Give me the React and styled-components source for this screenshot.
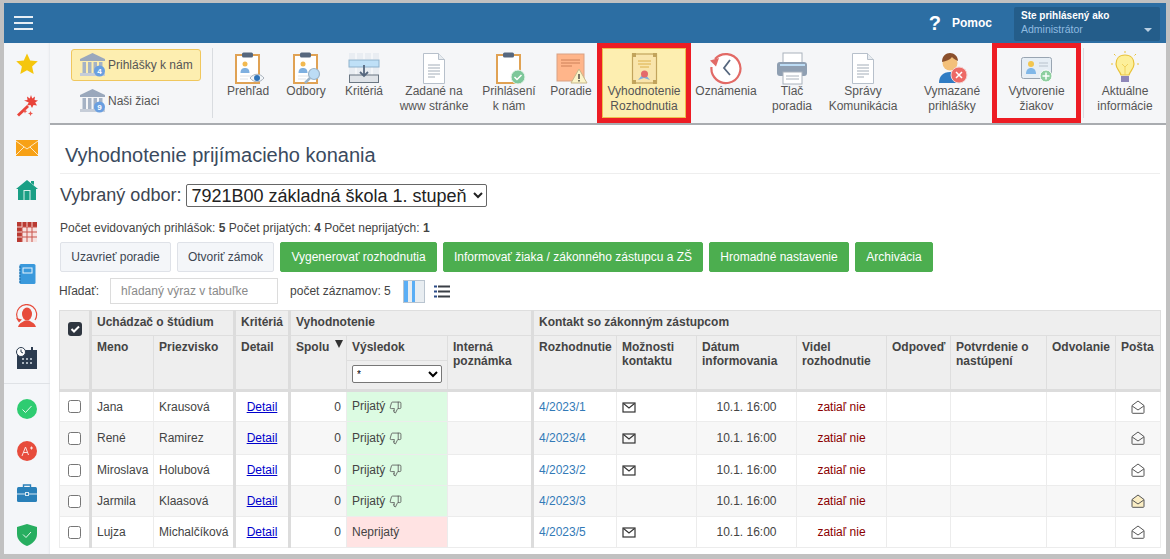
import React from "react";
import styled, { createGlobalStyle } from "styled-components";
import { ThumbsDown } from "lucide-react";

const GlobalStyle = createGlobalStyle`
  html, body {
    margin: 0;
    padding: 0;
    background: #c1c1c1;
    font-family: "Liberation Sans", Arial, sans-serif;
  }
`;

const Page = styled.div`
  box-sizing: border-box;
  width: 1170px;
  height: 559px;
  padding: 3px 4px 5px 4px;
  background: #c1c1c1;
  display: flex;
  flex-direction: column;
  overflow: hidden;
`;

const TopBar = styled.header`
  height: 40px;
  flex: none;
  background: #2c6ea3;
  display: flex;
  align-items: center;
  padding: 0 6px 0 10px;
`;

const Burger = styled.div`
  width: 19px;
  height: 14px;
  display: flex;
  flex-direction: column;
  justify-content: space-between;
  & > span {
    height: 2px;
    background: #e6eef5;
  }
`;

const Help = styled.div`
  margin-left: auto;
  display: flex;
  align-items: center;
  color: #fff;
  font-weight: 700;
  font-size: 12px;
  margin-right: 22px;
  b {
    font-size: 20px;
    margin-right: 11px;
  }
`;

const UserBox = styled.div`
  position: relative;
  box-sizing: border-box;
  width: 146px;
  height: 34px;
  margin-top: 1px;
  padding: 2px 7px;
  background: #245d8a;
  border-radius: 2px;
  line-height: 13px;
  color: #fff;
  font-size: 10px;
  font-weight: 700;
  span {
    display: block;
    margin-top: 1px;
    font-size: 10.5px;
    font-weight: 400;
    color: #8fbbe0;
  }
  &::after {
    content: "";
    position: absolute;
    right: 8px;
    bottom: 9px;
    border: 4px solid transparent;
    border-top: 4px solid #b9cfe2;
    border-bottom: 0;
  }
`;

const Body = styled.div`
  flex: 1;
  display: flex;
  min-height: 0;
`;

const Sidebar = styled.nav`
  width: 46px;
  flex: none;
  background: #f4f6f9;
  box-shadow: inset -2px 0 2px -1px #e6e8ec;
`;

const SideItem = styled.div`
  height: 42px;
  display: flex;
  align-items: center;
  justify-content: center;
`;

const SideRule = styled.div`
  height: 1px;
  margin: 4px 0;
  background: #dfe2e6;
`;

const Main = styled.main`
  flex: 1;
  min-width: 0;
  display: flex;
  flex-direction: column;
  background: #fff;
`;

const Toolbar = styled.div`
  box-sizing: border-box;
  height: 82px;
  flex: none;
  display: flex;
  background: #f5f6f8;
  border-bottom: 2px solid #a9acb0;
`;

const SwitchGroup = styled.div`
  box-sizing: border-box;
  width: 162px;
  flex: none;
  padding: 6px 0 0 21px;
  display: flex;
  flex-direction: column;
  gap: 4px;
`;

const SwitchButton = styled.div`
  box-sizing: border-box;
  width: 130px;
  height: 32px;
  display: flex;
  align-items: center;
  gap: 2px;
  padding-left: 8px;
  font-size: 12px;
  color: #555;
  border-radius: 3px;
  border: 1px solid ${(p) => (p.$active ? "#f0c75e" : "transparent")};
  background: ${(p) => (p.$active ? "#fdeeb0" : "transparent")};
`;

const ToolRule = styled.div`
  width: 1px;
  flex: none;
  margin: 5px ${(p) => p.$after || 0}px 5px ${(p) => p.$before || 0}px;
  background: #d9dce0;
`;

const Tool = styled.div`
  position: relative;
  box-sizing: border-box;
  width: ${(p) => p.$w}px;
  flex: ${(p) => (p.$w ? "none" : "1")};
  margin-left: ${(p) => p.$ml || 0}px;
  padding-top: 8px;
  display: flex;
  flex-direction: column;
  align-items: center;
  font-size: 12px;
  line-height: 15px;
  color: #555;
  text-align: center;
  background: ${(p) => (p.$active ? "#fdeeb0" : "transparent")};
  svg {
    display: block;
  }
  &::after {
    content: ${(p) => (p.$marked ? '""' : "none")};
    position: absolute;
    inset: 0;
    border: 5px solid #ed1c24;
    box-shadow: ${(p) => (p.$active ? "inset 0 0 0 1px #eebd4f" : "none")};
  }
`;

const ToolLabel = styled.div`
  white-space: pre-line;
  margin-top: -1px;
`;

const Content = styled.div`
  flex: 1;
  padding: 18px 6px 0 10px;
  color: #3d4652;
`;

const Title = styled.h1`
  margin: 0;
  padding: 0 0 6px 5px;
  font-size: 20px;
  line-height: 24px;
  font-weight: 400;
  color: #3a4a5e;
  border-bottom: 1px solid #eeeeee;
`;

const FieldRow = styled.div`
  margin-top: 10px;
  height: 23px;
  display: flex;
  align-items: center;
  gap: 5px;
  font-size: 18px;
  color: #3d4652;
`;

const FieldSelect = styled.select`
  box-sizing: border-box;
  width: 301px;
  height: 23px;
  font-family: "Liberation Sans", Arial, sans-serif;
  font-size: 18px;
  color: #222;
  background: #fff;
  border: 1px solid #666;
  border-radius: 2px;
`;

const Stats = styled.div`
  margin-top: 14px;
  font-size: 12px;
  line-height: 14px;
  color: #444;
  b {
    font-weight: 700;
  }
`;

const Actions = styled.div`
  margin-top: 7px;
  display: flex;
  gap: 6px;
`;

const ActionButton = styled.div`
  box-sizing: border-box;
  height: 30px;
  width: ${(p) => p.$w}px;
  display: flex;
  align-items: center;
  justify-content: center;
  font-size: 12px;
  border-radius: 2px;
  color: ${(p) => (p.$green ? "#fff" : "#3d4652")};
  background: ${(p) => (p.$green ? "#4cae4f" : "#f4f6f9")};
  border: 1px solid ${(p) => (p.$green ? "#4cae4f" : "#dfe2e8")};
`;

const SearchRow = styled.div`
  margin: 6px 0 6px -1px;
  height: 26px;
  display: flex;
  align-items: center;
  font-size: 12px;
  color: #444;
`;

const SearchInput = styled.input`
  box-sizing: border-box;
  width: 168px;
  height: 26px;
  margin: 0 12px 0 11px;
  padding: 0 10px;
  font-family: "Liberation Sans", Arial, sans-serif;
  font-size: 12px;
  border: 1px solid #dcdcdc;
  &::placeholder {
    color: #8a8a8a;
  }
`;

const ViewToggle = styled.div`
  margin-left: 12px;
  display: flex;
  align-items: center;
  gap: 9px;
`;

const Table = styled.table`
  width: 1101px;
  margin-left: -1px;
  table-layout: fixed;
  border-collapse: collapse;
  font-size: 12px;
  color: #444;
`;

const Th = styled.th`
  position: relative;
  box-sizing: border-box;
  padding: 4px 5px;
  text-align: left;
  vertical-align: top;
  font-weight: 700;
  line-height: 14px;
  background: #eeeeee;
  color: #444;
  border: 1px solid #dedede;
  border-right: ${(p) => (p.$thick ? "3px solid #dcdcdc" : "1px solid #dedede")};
  border-bottom: ${(p) => (p.$last ? "3px solid #dcdcdc" : "1px solid #dedede")};
`;

const Tr = styled.tr`
  height: ${(p) => p.$h}px;
  background: ${(p) => (p.$odd ? "#f7f7f7" : "#fff")};
`;

const Td = styled.td`
  box-sizing: border-box;
  padding: 0 5px;
  border: 1px solid #ececec;
  border-right: ${(p) => (p.$thick ? "3px solid #dcdcdc" : "1px solid #ececec")};
  text-align: ${(p) => p.$align || "left"};
  color: ${(p) => p.$color || "#444"};
  background: ${(p) => p.$bg || "transparent"};
  white-space: nowrap;
  svg {
    vertical-align: middle;
  }
`;

const CheckMark = styled.input`
  display: block;
  width: 13px;
  height: 13px;
  margin: 0 auto;
`;

const HeadCheck = styled.div`
  width: 14px;
  height: 14px;
  margin: 7px auto 0;
  border-radius: 3px;
  background: #2f3640;
  display: flex;
  align-items: center;
  justify-content: center;
`;

const SortArrow = styled.span`
  position: absolute;
  right: 3px;
  top: 4px;
  border: 4.5px solid transparent;
  border-top: 8px solid #333;
  border-bottom: 0;
`;

const ResultSelect = styled.select`
  display: block;
  box-sizing: border-box;
  width: 90px;
  height: 18px;
  font-family: "Liberation Sans", Arial, sans-serif;
  font-size: 10px;
  background: #fff;
  border: 1px solid #777;
  border-radius: 2px;
`;

const DetailLink = styled.a`
  color: #0000cc;
  text-decoration: underline;
`;

const DocLink = styled.a`
  color: #337ab7;
`;

const Star = () => (
  <svg width="24" height="24" viewBox="0 0 24 24">
    <path d="M12 1.5l3.2 7 7.6.8-5.7 5.1 1.6 7.500L12 18.200l-6.700 3.700 1.600-7.500L1.200 9.300l7.600-.8z" fill="#f5c60d" />
  </svg>
);

const Wand = () => (
  <svg width="24" height="24" viewBox="0 0 24 24">
    <path d="M2 20.500L12 11l2 2L4 22.500z" fill="#e8433a" />
    <path d="M16 1l1.200 3.500L20 2.500l-.5 3.500 3.500.5-2.800 2 1.800 3-3.500-.6-1.500 3-1.500-3-3.500.6 1.800-3L9 6.500l3.500-.5L12 2.500l2.800 2z" fill="#e8433a" />
    <path d="M10 15l.7 1.500 1.500.7-1.500.7-.7 1.500-.7-1.500-1.500-.7 1.500-.7zM15.500 17l.8 1.700 1.700.8-1.700.8-.8 1.700-.8-1.700-1.700-.8 1.700-.8z" fill="#ec5a50" />
  </svg>
);

const OrangeMail = () => (
  <svg width="22" height="16" viewBox="0 0 22 16">
    <rect width="22" height="16" fill="#f7a116" />
    <path d="M0 1l11 8 11-8M0 15l8-8M22 15l-8-8" stroke="#fde9c4" strokeWidth="1" fill="none" />
  </svg>
);

const House = () => (
  <svg width="22" height="22" viewBox="0 0 22 22">
    <path d="M11 1l11 9h-2v11H2V10H0zM15 2h3v4l-3-2z" fill="#1a9f85" />
    <rect x="7.500" y="11" width="7" height="10" fill="#d9f0ec" />
    <rect x="8.500" y="12" width="5" height="9" fill="#1a9f85" />
  </svg>
);

const RedCalendar = () => (
  <svg width="20" height="20" viewBox="0 0 20 20">
    <rect width="20" height="20" fill="#f7e2e0" />
    <rect width="20" height="5" fill="#b93a32" />
    <rect width="5" height="20" fill="#b93a32" />
    <path d="M0 5h20M0 10h20M0 15h20M5 0v20M10 0v20M15 0v20" stroke="#c9554d" strokeWidth="1" />
    <path d="M0 5h5M0 10h5M0 15h5M5 0v5M10 0v5M15 0v5" stroke="#ecc7c4" strokeWidth="1" />
  </svg>
);

const Notebook = () => (
  <svg width="18" height="20" viewBox="0 0 18 20">
    <rect x="1.500" width="16" height="20" rx="1.500" fill="#3a99dc" />
    <rect x="5" y="4" width="9" height="5" fill="none" stroke="#e7f3fb" strokeWidth="1" />
    <path d="M1 3h2M1 6h2M1 9h2M1 12h2M1 15h2M1 18h2" stroke="#1f6aa5" strokeWidth="1" />
  </svg>
);

const PersonRed = () => (
  <svg width="22" height="24" viewBox="0 0 22 24">
    <ellipse cx="11" cy="10" rx="5" ry="6.500" fill="#e74c3c" />
    <path d="M2 23c1-4 5-5 7-6.500h4c2 1.500 6 2.500 7 6.500z" fill="#e74c3c" />
    <path d="M3 17A10 10 0 1 1 19 16" fill="none" stroke="#e74c3c" strokeWidth="1.200" />
    <path d="M0 14l3 4.500 3-3z" fill="#e74c3c" />
  </svg>
);

const DarkCalendar = () => (
  <svg width="22" height="22" viewBox="0 0 22 22">
    <rect x="1" y="5" width="20" height="17" fill="#2b3b4f" />
    <rect x="1" y="3" width="20" height="4" fill="#2b3b4f" />
    <path d="M6 11h2v2H6zM10 11h2v2h-2zM14 11h2v2h-2zM6 15h2v2H6zM10 15h2v2h-2zM14 15h2v2h-2z" fill="#aab4be" />
    <circle cx="5" cy="5" r="4.500" fill="#fff" stroke="#2b3b4f" strokeWidth="1" />
    <path d="M5 2.500V5l2 1" stroke="#2b3b4f" fill="none" />
    <path d="M16 0v4" stroke="#2b3b4f" strokeWidth="2" />
  </svg>
);

const GreenBadge = () => (
  <svg width="20" height="20" viewBox="0 0 20 20">
    <circle cx="10" cy="10" r="10" fill="#2ecc71" />
    <path d="M5.500 10.500l3 3 6-6.500" stroke="#e6f9ee" strokeWidth="1" fill="none" />
  </svg>
);

const RedGrade = () => (
  <svg width="20" height="20" viewBox="0 0 20 20">
    <circle cx="10" cy="10" r="10" fill="#e74c3c" />
    <path d="M5 15l3.500-9 3 8M6.500 11.500h4M13 7h3M14.500 5.500v3" stroke="#fbe3e0" strokeWidth="1" fill="none" />
  </svg>
);

const Briefcase = () => (
  <svg width="20" height="18" viewBox="0 0 20 18">
    <path d="M6.500 3V1h7v2" fill="none" stroke="#2980b9" strokeWidth="1.400" />
    <rect y="3" width="20" height="15" rx="1.500" fill="#2980b9" />
    <path d="M0 10h20" stroke="#d4e6f1" strokeWidth="1" />
    <rect x="8.500" y="8.500" width="3" height="3" fill="#2980b9" stroke="#d4e6f1" strokeWidth="1" />
  </svg>
);

const Shield = () => (
  <svg width="20" height="22" viewBox="0 0 20 22">
    <path d="M10 0l10 3v7c0 6-5 10-10 12C5 20 0 16 0 10V3z" fill="#27ae60" />
    <path d="M6 10.500l3 3 5-5.500" stroke="#e6f9ee" strokeWidth="1" fill="none" />
  </svg>
);

const Bank = ({ count }) => (
  <svg width="26" height="26" viewBox="0 0 26 26">
    <path d="M12.500 1L25 7v2H0V7z" fill="#9aa8bc" />
    <path d="M2.500 10h3.500v11H2.500zM8 10h3.500v11H8zM13.500 10H17v11h-3.500zM19 10h3.500v11H19z" fill="#a6b3c5" />
    <rect y="21" width="25" height="3" fill="#c6cdd8" />
    <circle cx="19.500" cy="19" r="5.500" fill="#6a9fe0" />
    <text x="19.500" y="22" fontSize="8" fontWeight="700" fill="#fff" textAnchor="middle">{count}</text>
  </svg>
);

const ClipboardBase = ({ children }) => (
  <svg width="36" height="34" viewBox="0 0 36 34">
    <rect x="6" y="4" width="23" height="28" fill="#fff" stroke="#e0a254" strokeWidth="2" />
    <rect x="12" y="1.500" width="11" height="5" rx="1.500" fill="#56677e" />
    {children}
  </svg>
);

const PersonMini = () => (
  <>
    <circle cx="15" cy="13" r="2.500" fill="#f2b950" />
    <path d="M10.500 22c0-4 2-5 4.500-5s4.500 1 4.500 5z" fill="#7fb0e0" />
    <path d="M10 25h12M10 28h8" stroke="#dfe3e8" strokeWidth="1" />
  </>
);

const ReviewIcon = () => (
  <ClipboardBase>
    <PersonMini />
    <path d="M20 27c4-5 10-5 14 0-4 5-10 5-14 0z" fill="#f1f5f9" stroke="#a8b0ba" />
    <circle cx="27" cy="27" r="3" fill="#2f73b8" />
  </ClipboardBase>
);

const FieldsIcon = () => (
  <ClipboardBase>
    <PersonMini />
    <circle cx="26" cy="23" r="5.500" fill="#bcdcf5" stroke="#9cb4c8" strokeWidth="1.200" />
    <path d="M22 27l-5 5" stroke="#9cb4c8" strokeWidth="2.500" />
  </ClipboardBase>
);

const CriteriaIcon = () => (
  <svg width="36" height="34" viewBox="0 0 36 34">
    <rect x="3" y="2" width="30" height="30" fill="#e9edf2" />
    <path d="M3 9h30M10 2v30M18 2v7M26 2v30" stroke="#fff" strokeWidth="1" />
    <rect x="3" y="9" width="30" height="7" fill="#bfe0f7" stroke="#8fb2cc" strokeWidth="1" />
    <rect x="3.500" y="24" width="29" height="7.500" fill="#dfe3e8" stroke="#6a7682" strokeWidth="1" />
    <path d="M18 14v11M14 21l4 4 4-4" stroke="#56677e" strokeWidth="1.800" fill="none" />
  </svg>
);

const PageIcon = () => (
  <svg width="36" height="34" viewBox="0 0 36 34">
    <path d="M7.500 2.500h15l6 6v24h-21z" fill="#fff" stroke="#b7c0cb" strokeWidth="1" />
    <path d="M22.500 2.500v6h6" fill="#e8ecf0" stroke="#b7c0cb" strokeWidth="1" />
    <path d="M12 14h12M12 17h12M12 20h12M12 23h12M12 26h7" stroke="#a3adb8" strokeWidth="1" />
  </svg>
);

const ApplyIcon = () => (
  <ClipboardBase>
    <circle cx="27" cy="26" r="7" fill="#7dc79a" stroke="#eaf6ef" strokeWidth="1" />
    <path d="M23.500 26l2.500 2.500 4.500-4.500" stroke="#fff" strokeWidth="1.500" fill="none" />
  </ClipboardBase>
);

const RankIcon = () => (
  <svg width="36" height="34" viewBox="0 0 36 34">
    <rect x="4" y="3" width="27" height="27" fill="#ffb58a" stroke="#d9a184" strokeWidth="1" />
    <path d="M8 9h19M8 12h19M8 15h11" stroke="#cd8058" strokeWidth="1" />
    <path d="M26 18l8 14H18z" fill="#fbf4c8" stroke="#c7b88a" strokeWidth="1" />
    <path d="M26 23v5M26 29v1.500" stroke="#333" strokeWidth="1.300" />
  </svg>
);

const CertIcon = () => (
  <svg width="36" height="34" viewBox="0 0 36 34">
    <rect x="6.500" y="3" width="24" height="29" fill="#f9e5ac" stroke="#c2a45c" strokeWidth="1.200" />
    <path d="M6 2h4v4H6zM27 2h4v4h-4zM6 29h4v4H6zM27 29h4v4h-4z" fill="#c2a45c" />
    <path d="M12 10h13M12 13h13M14 16h9" stroke="#dcb04a" strokeWidth="1" />
    <path d="M12 29l5-6 2 0 5 6-6-2z" fill="#7fb0e0" />
    <circle cx="18.500" cy="23" r="3.500" fill="#e46a6a" />
  </svg>
);

const NoticeIcon = () => (
  <svg width="36" height="34" viewBox="0 0 36 34">
    <path d="M7 8A14.500 14.500 0 1 1 3.500 16" fill="#fff" stroke="#e26a66" strokeWidth="2.200" />
    <path d="M22 9l-6 8 6 7" stroke="#56677e" strokeWidth="1.800" fill="none" />
    <path d="M2 9.500l9-2.500-3 8.500z" fill="#e26a66" />
  </svg>
);

const PrinterIcon = () => (
  <svg width="36" height="34" viewBox="0 0 36 34">
    <rect x="9" y="2" width="19" height="12" fill="#fff" stroke="#aab2bc" strokeWidth="1" />
    <rect x="3" y="11" width="30" height="14" rx="3" fill="#8f9fb2" />
    <rect x="6" y="13" width="25" height="2" fill="#bcdcf5" />
    <rect x="9" y="21" width="19" height="12" fill="#fff" stroke="#aab2bc" strokeWidth="1" />
    <path d="M12 25h13M12 28h13" stroke="#aab2bc" strokeWidth="1" />
  </svg>
);

const DeletedIcon = () => (
  <svg width="36" height="34" viewBox="0 0 36 34">
    <path d="M5 32c0-7 4-11 11-11s10 3 11 11z" fill="#2f7cc4" />
    <circle cx="16" cy="12" r="7.500" fill="#f3c07a" />
    <path d="M8 11c0-6 4-9 8-9s8 3 8 8c-3-1-5-3-6-4-2 3-6 4-10 5z" fill="#8a4f2c" />
    <circle cx="25" cy="24" r="8" fill="#ed6a66" stroke="#f4d4d2" strokeWidth="1" />
    <path d="M22 21l6 6M28 21l-6 6" stroke="#fff" strokeWidth="1.500" />
  </svg>
);

const CreateIcon = () => (
  <svg width="36" height="34" viewBox="0 0 36 34">
    <rect x="2.500" y="6.500" width="30" height="21" rx="2" fill="#e6eef5" stroke="#99a5b2" strokeWidth="1" />
    <circle cx="12" cy="13" r="3" fill="#f2c64f" />
    <path d="M7 23c0-4 2-6 5-6s5 2 5 6z" fill="#7fb7e8" />
    <path d="M20 12h9M20 15h9" stroke="#b8c2cc" strokeWidth="1" />
    <circle cx="27" cy="25" r="6" fill="#8ecf9f" stroke="#fff" strokeWidth="1" />
    <path d="M27 21.500v7M23.500 25h7" stroke="#fff" strokeWidth="1.500" />
  </svg>
);

const BulbIcon = () => (
  <svg width="36" height="34" viewBox="0 0 36 34">
    <path d="M18 4c-6 0-9 4-9 9 0 5 4 7 5 11h8c1-4 5-6 5-11 0-5-3-9-9-9z" fill="#fdf09a" stroke="#e8c23a" strokeWidth="1.200" />
    <rect x="14" y="25" width="8" height="6" fill="#8e86b8" />
    <path d="M15 13l3 3 3-3M18 16v8" stroke="#f0d25e" fill="none" />
    <path d="M18 0v2M4 13h2M30 13h2M7 3l1.500 1.500M29 3l-1.500 1.500" stroke="#e8c23a" />
  </svg>
);

const ColumnsIcon = () => (
  <svg width="22" height="23" viewBox="0 0 22 23">
    <rect width="22" height="23" fill="#b9c4cf" />
    <rect x="1" y="1" width="20" height="21" fill="#e8edf1" />
    <rect x="1" y="1" width="4" height="21" fill="#5aaef5" />
    <rect x="9" y="1" width="3" height="21" fill="#5aaef5" />
  </svg>
);

const ListIcon = () => (
  <svg width="16" height="13" viewBox="0 0 16 13">
    <path d="M4 1.500h12M4 6.500h12M4 11.500h12" stroke="#3a3f46" strokeWidth="2.200" />
    <path d="M0 1.500h3M0 6.500h3M0 11.500h3" stroke="#2c4c88" strokeWidth="2.200" />
  </svg>
);

const ContactMail = () => (
  <svg width="14" height="11" viewBox="0 0 14 11">
    <rect x="1" y="1" width="12" height="9" fill="none" stroke="#333" strokeWidth="1.200" />
    <path d="M1.500 1.500L7 6l5.500-4.500" fill="none" stroke="#333" strokeWidth="1.100" />
  </svg>
);

const PostMail = ({ seen }) => (
  <svg width="14" height="14" viewBox="0 0 14 14">
    <path d="M1 5.500L7 1l6 4.500V12.500a.8.8 0 0 1-.8.800H1.800a.8.8 0 0 1-.8-.8z" fill={seen ? "#fbeec5" : "none"} stroke="#555" strokeWidth="1" />
    <path d="M1.200 6l5.800 4 5.800-4" fill="none" stroke="#555" strokeWidth="1" />
  </svg>
);

const sideTop = [Star, Wand, OrangeMail, House, RedCalendar, Notebook, PersonRed, DarkCalendar];
const sideBottom = [GreenBadge, RedGrade, Briefcase, Shield];

const tools = [
  { label: "Prehľad", w: 58, Icon: ReviewIcon },
  { label: "Odbory", w: 58, Icon: FieldsIcon },
  { label: "Kritériá", w: 58, Icon: CriteriaIcon },
  { label: "Zadané na\nwww stránke", w: 82, Icon: PageIcon },
  { label: "Prihlásení\nk nám", w: 68, Icon: ApplyIcon },
  { label: "Poradie", w: 52, ml: 2, Icon: RankIcon },
  { label: "Vyhodnotenie\nRozhodnutia", w: 94, Icon: CertIcon, active: true, marked: true },
  { label: "Oznámenia", w: 70, Icon: NoticeIcon },
  { label: "Tlač\nporadia", w: 62, Icon: PrinterIcon },
  { label: "Správy\nKomunikácia", w: 80, Icon: PageIcon },
  { label: "Vymazané\nprihlášky", w: 80, ml: 9, Icon: DeletedIcon },
  { label: "Vytvorenie\nžiakov", w: 89, Icon: CreateIcon, marked: true },
];

const columns = [31, 63, 81, 55, 57, 101, 85, 84, 80, 100, 90, 64, 96, 69, 45];

const rows = [
  { first: "Jana", last: "Krausová", doc: "4/2023/1", mail: true, h: 31 },
  { first: "René", last: "Ramirez", doc: "4/2023/4", mail: true, h: 33 },
  { first: "Miroslava", last: "Holubová", doc: "4/2023/2", mail: true, h: 31 },
  { first: "Jarmila", last: "Klaasová", doc: "4/2023/3", mail: false, seen: true, h: 31 },
  { first: "Lujza", last: "Michalčíková", doc: "4/2023/5", mail: true, rejected: true, h: 31 },
];

const App = () => {
  return (
    <Page>
      <GlobalStyle />
      <TopBar>
        <Burger>
          <span />
          <span />
          <span />
        </Burger>
        <Help>
          <b>?</b>
          Pomoc
        </Help>
        <UserBox>
          Ste prihlásený ako
          <span>Administrátor</span>
        </UserBox>
      </TopBar>
      <Body>
        <Sidebar>
          {sideTop.map((Icon, i) => (
            <SideItem key={i}>
              <Icon />
            </SideItem>
          ))}
          <SideRule />
          {sideBottom.map((Icon, i) => (
            <SideItem key={i}>
              <Icon />
            </SideItem>
          ))}
        </Sidebar>
        <Main>
          <Toolbar>
            <SwitchGroup>
              <SwitchButton $active>
                <Bank count="4" />
                Prihlášky k nám
              </SwitchButton>
              <SwitchButton>
                <Bank count="9" />
                Naši žiaci
              </SwitchButton>
            </SwitchGroup>
            <ToolRule $after={6} />
            {tools.map(({ label, w, ml, Icon, active, marked }) => (
              <Tool key={label} $w={w} $ml={ml} $active={active} $marked={marked}>
                <Icon />
                <ToolLabel>{label}</ToolLabel>
              </Tool>
            ))}
            <ToolRule $before={2} />
            <Tool>
              <BulbIcon />
              <ToolLabel>{"Aktuálne\ninformácie"}</ToolLabel>
            </Tool>
          </Toolbar>
          <Content>
            <Title>Vyhodnotenie prijímacieho konania</Title>
            <FieldRow>
              Vybraný odbor:
              <FieldSelect>
                <option>7921B00 základná škola 1. stupeň</option>
              </FieldSelect>
            </FieldRow>
            <Stats>
              Počet evidovaných prihlášok: <b>5</b> Počet prijatých: <b>4</b> Počet neprijatých: <b>1</b>
            </Stats>
            <Actions>
              <ActionButton $w={111}>Uzavrieť poradie</ActionButton>
              <ActionButton $w={97}>Otvoriť zámok</ActionButton>
              <ActionButton $w={157} $green>Vygenerovať rozhodnutia</ActionButton>
              <ActionButton $w={260} $green>Informovať žiaka / zákonného zástupcu a ZŠ</ActionButton>
              <ActionButton $w={140} $green>Hromadné nastavenie</ActionButton>
              <ActionButton $w={78} $green>Archivácia</ActionButton>
            </Actions>
            <SearchRow>
              Hľadať:
              <SearchInput placeholder="hľadaný výraz v tabuľke" />
              počet záznamov: 5
              <ViewToggle>
                <ColumnsIcon />
                <ListIcon />
              </ViewToggle>
            </SearchRow>
            <Table>
              <colgroup>
                {columns.map((w, i) => (
                  <col key={i} width={w} />
                ))}
              </colgroup>
              <thead>
                <Tr $h={25}>
                  <Th rowSpan={3} $thick $last>
                    <HeadCheck>
                      <svg width="10" height="10" viewBox="0 0 10 10">
                        <path d="M1.500 5l2.500 2.500 5-5" stroke="#fff" strokeWidth="2" fill="none" />
                      </svg>
                    </HeadCheck>
                  </Th>
                  <Th colSpan={2} $thick>Uchádzač o štúdium</Th>
                  <Th $thick>Kritériá</Th>
                  <Th colSpan={3} $thick>Vyhodnotenie</Th>
                  <Th colSpan={8}>Kontakt so zákonným zástupcom</Th>
                </Tr>
                <Tr $h={25}>
                  <Th rowSpan={2} $last>Meno</Th>
                  <Th rowSpan={2} $thick $last>Priezvisko</Th>
                  <Th rowSpan={2} $thick $last>Detail</Th>
                  <Th rowSpan={2} $last>
                    Spolu
                    <SortArrow />
                  </Th>
                  <Th>Výsledok</Th>
                  <Th rowSpan={2} $thick $last>Interná poznámka</Th>
                  <Th rowSpan={2} $last>Rozhodnutie</Th>
                  <Th rowSpan={2} $last>Možnosti kontaktu</Th>
                  <Th rowSpan={2} $last>Dátum informovania</Th>
                  <Th rowSpan={2} $last>Videl rozhodnutie</Th>
                  <Th rowSpan={2} $last>Odpoveď</Th>
                  <Th rowSpan={2} $last>Potvrdenie o nastúpení</Th>
                  <Th rowSpan={2} $last>Odvolanie</Th>
                  <Th rowSpan={2} $last>Pošta</Th>
                </Tr>
                <Tr $h={30}>
                  <Th $last>
                    <ResultSelect>
                      <option>*</option>
                    </ResultSelect>
                  </Th>
                </Tr>
              </thead>
              <tbody>
                {rows.map((r, i) => (
                  <Tr key={r.doc} $h={r.h} $odd={i % 2 === 1}>
                    <Td $thick>
                      <CheckMark type="checkbox" />
                    </Td>
                    <Td>{r.first}</Td>
                    <Td $thick>{r.last}</Td>
                    <Td $thick $align="center">
                      <DetailLink href="#">Detail</DetailLink>
                    </Td>
                    <Td $align="right">0</Td>
                    <Td $bg={r.rejected ? "#ffe3e3" : "#dcfbe2"}>
                      {r.rejected ? "Neprijatý" : "Prijatý "}
                      {!r.rejected && <ThumbsDown size={13} color="#555" strokeWidth={1.5} />}
                    </Td>
                    <Td $thick />
                    <Td>
                      <DocLink>{r.doc}</DocLink>
                    </Td>
                    <Td>{r.mail && <ContactMail />}</Td>
                    <Td $align="center">10.1. 16:00</Td>
                    <Td $align="center" $color="#8b0000">zatiaľ nie</Td>
                    <Td />
                    <Td />
                    <Td />
                    <Td $align="center">
                      <PostMail seen={r.seen} />
                    </Td>
                  </Tr>
                ))}
              </tbody>
            </Table>
          </Content>
        </Main>
      </Body>
    </Page>
  );
};

export default App;
